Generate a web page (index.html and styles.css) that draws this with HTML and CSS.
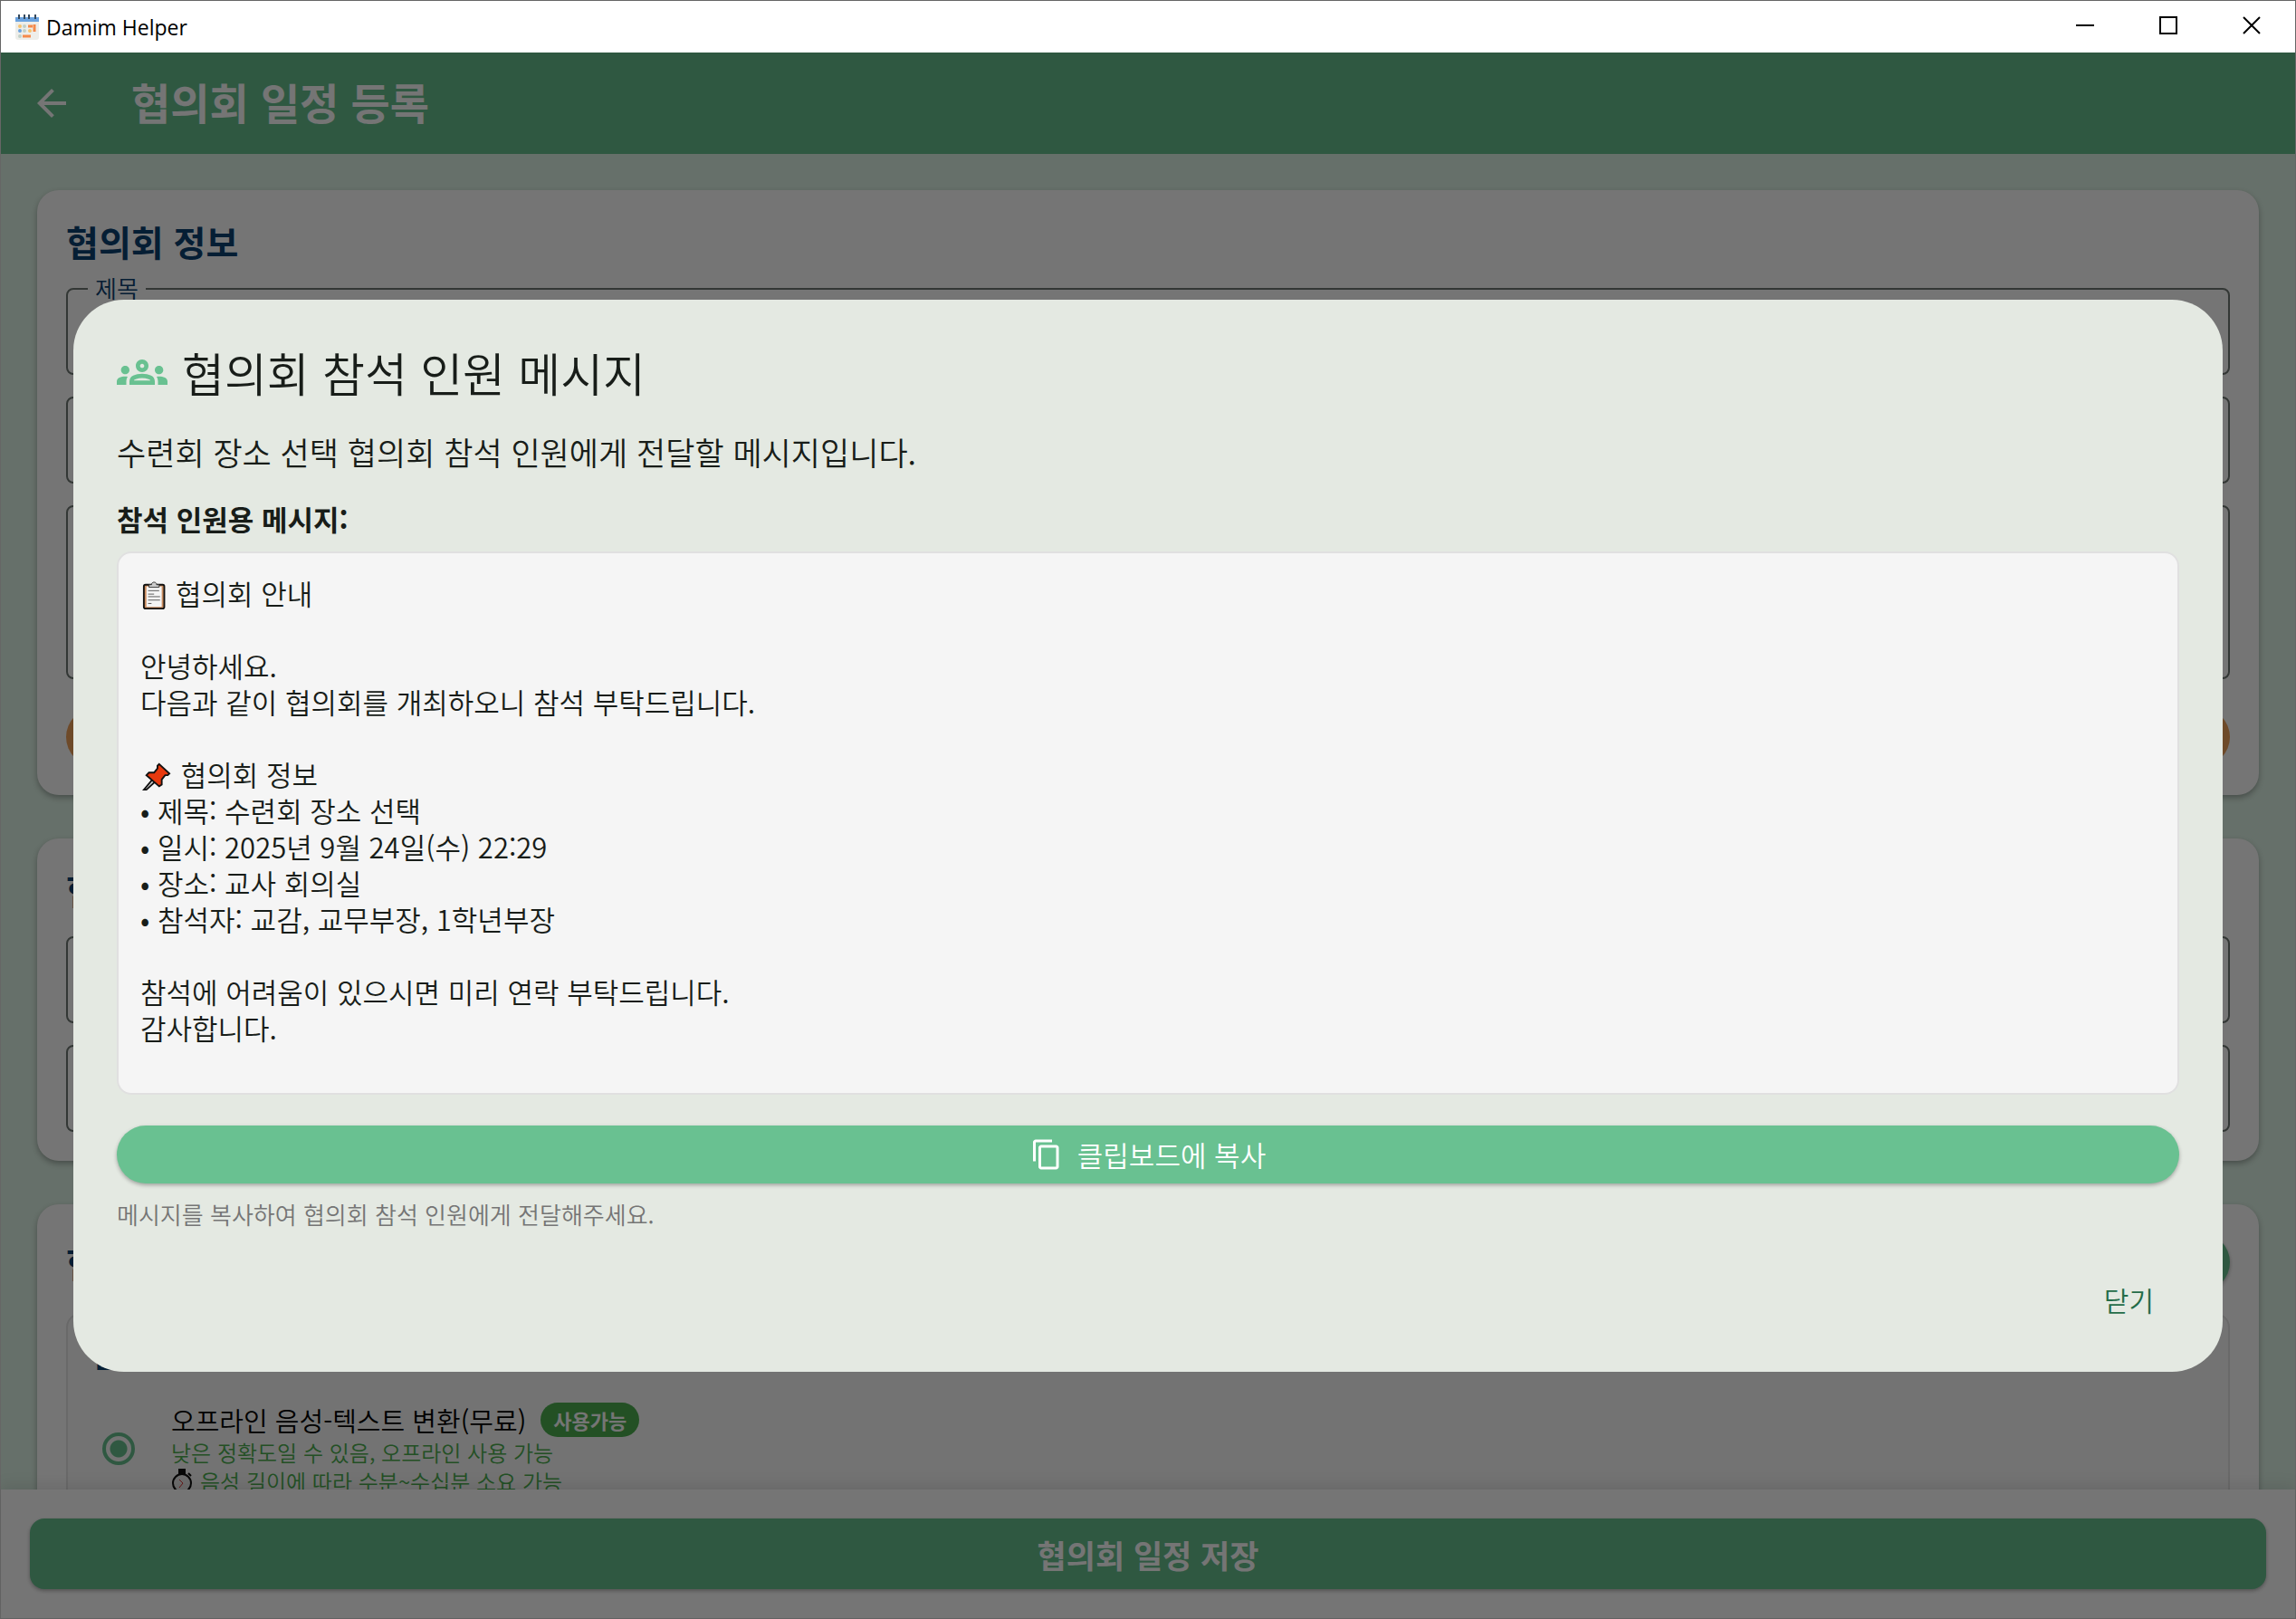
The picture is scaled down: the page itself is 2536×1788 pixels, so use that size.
FILE: index.html
```html
<!DOCTYPE html>
<html lang="ko">
<head>
    <meta charset="UTF-8">
    <meta name="viewport" content="width=device-width, initial-scale=1.0">
    <title>Damim Helper</title>
    <link rel="stylesheet" href="styles.css">
</head>
<body>
    <div class="window">
        <header class="titlebar">
            <svg class="app-icon" viewBox="0 0 26 28">
                <rect x="0" y="4" width="26" height="24" rx="3" fill="#eeeeea"/>
                <rect x="0" y="3" width="26" height="5" fill="#6ba3e0"/>
                <path d="M4 0v5M10 0v5M15 0v5M22 0v5" stroke="#34495e" stroke-width="2"/>
                <circle cx="5" cy="13" r="2" fill="#f6c370"/>
                <circle cx="10" cy="13" r="2" fill="#c2d0c8"/>
                <circle cx="5" cy="18" r="2" fill="#6ba3e0"/>
                <circle cx="10" cy="18" r="2" fill="#c2d0c8"/>
                <circle cx="16" cy="18" r="2" fill="#f6c370"/>
                <circle cx="5" cy="24" r="2" fill="#c2d0c8"/>
                <path d="M14 13h5M21 11v8M8 24h9" stroke="#f58a4b" stroke-width="3"/>
            </svg>
            <span class="app-name">Damim Helper</span>
            <div class="controls">
                <button class="control" aria-label="최소화"><svg viewBox="0 0 20 20"><path d="M0 10h20"/></svg></button>
                <button class="control" aria-label="최대화"><svg viewBox="0 0 20 20"><rect x="1" y="1" width="18" height="18"/></svg></button>
                <button class="control" aria-label="창 닫기"><svg viewBox="0 0 20 20"><path d="M1 1l18 18M19 1L1 19"/></svg></button>
            </div>
        </header>

        <div class="app">
            <div class="appbar">
                <button class="back" aria-label="뒤로"><svg viewBox="0 0 24 24"><path d="M20 11H7.83l5.59-5.59L12 4l-8 8 8 8 1.41-1.41L7.83 13H20v-2z"/></svg></button>
                <h1>협의회 일정 등록</h1>
            </div>

            <main class="content">
                <section class="card">
                    <h2>협의회 정보</h2>
                    <div class="fields">
                        <div class="field">
                            <label for="title">제목</label>
                            <input type="text" id="title">
                        </div>
                        <div class="field"><input type="text" aria-label="일시"></div>
                        <div class="field"><textarea aria-label="내용"></textarea></div>
                    </div>
                    <button class="pill orange" aria-label="추가"></button>
                </section>

                <section class="card">
                    <h2>협의회</h2>
                    <div class="fields">
                        <div class="field"><input type="text" aria-label="장소"></div>
                        <div class="field"><input type="text" aria-label="참석자"></div>
                    </div>
                </section>

                <section class="card">
                    <div class="card-head">
                        <h2>협의회</h2>
                        <button class="pill green" aria-label="녹음"></button>
                    </div>
                    <div class="panel">
                        <h3>음성</h3>
                        <label class="option">
                            <input type="radio" name="engine" checked>
                            <span class="option-text">
                                <span class="option-title">오프라인 음성-텍스트 변환(무료) <span class="badge">사용가능</span></span>
                                <span class="option-sub">낮은 정확도일 수 있음, 오프라인 사용 가능</span>
                                <span class="option-sub">
                                    <svg class="watch" viewBox="0 0 24 28"><path d="M9 1h6v4H9zM19 5l3 3" fill="#111" stroke="#111" stroke-width="2"/><circle cx="12" cy="16" r="10" fill="#eee" stroke="#111" stroke-width="2"/><path d="M9 12l4 4-4 5" fill="none" stroke="#d33"/></svg>
                                    음성 길이에 따라 수분~수십분 소요 가능
                                </span>
                            </span>
                        </label>
                    </div>
                </section>
            </main>

            <footer class="savebar">
                <button class="save">협의회 일정 저장</button>
            </footer>

            <div class="scrim">
                <div class="dialog" role="dialog" aria-labelledby="dialog-title">
                    <div class="dialog-head">
                        <svg class="groups" viewBox="0 0 24 24"><path d="M4 13c1.1 0 2-.9 2-2s-.9-2-2-2-2 .9-2 2 .9 2 2 2zm1.13 1.1c-.37-.06-.74-.1-1.13-.1-.99 0-1.93.21-2.78.58C.48 14.9 0 15.62 0 16.43V18h4.5v-1.61c0-.83.23-1.61.63-2.29zM20 13c1.1 0 2-.9 2-2s-.9-2-2-2-2 .9-2 2 .9 2 2 2zm4 3.43c0-.81-.48-1.53-1.22-1.85-.85-.37-1.79-.58-2.78-.58-.39 0-.76.04-1.13.1.4.68.63 1.46.63 2.29V18H24v-1.57zM16.24 13.65c-1.17-.52-2.61-.9-4.24-.9s-3.07.39-4.24.9C6.68 14.13 6 15.21 6 16.39V18h12v-1.61c0-1.18-.68-2.26-1.76-2.74zM8.07 16c.09-.23.13-.39.91-.69.97-.38 1.99-.56 3.02-.56s2.05.18 3.02.56c.77.3.81.46.91.69H8.07zM12 8c.55 0 1 .45 1 1s-.45 1-1 1-1-.45-1-1 .45-1 1-1m0-2c-1.66 0-3 1.34-3 3s1.34 3 3 3 3-1.34 3-3-1.34-3-3-3z"/></svg>
                        <h2 id="dialog-title">협의회 참석 인원 메시지</h2>
                    </div>
                    <p class="lead">수련회 장소 선택 협의회 참석 인원에게 전달할 메시지입니다.</p>
                    <h3>참석 인원용 메시지:</h3>
                    <div class="message">
                        <p><svg class="clipboard" viewBox="0 0 28 34"><rect x="2" y="4" width="24" height="28" rx="2" fill="#c98b5e" stroke="#111" stroke-width="2"/><path d="M5 6h18v24H5z" fill="#f4f4f4"/><path d="M8 7V4h3c0-4 6-4 6 0h3v3z" fill="#ccc" stroke="#333"/><path d="M7 11h13M7 15h7M7 18h14M7 22h14M7 26h4" stroke="#555"/></svg> 협의회 안내</p>
                        <br>
                        <p>안녕하세요.</p>
                        <p>다음과 같이 협의회를 개최하오니 참석 부탁드립니다.</p>
                        <br>
                        <p><svg class="pin" viewBox="0 0 34 34"><path d="M13 19L2 32l3 0 11-10z" fill="#ddd" stroke="#111" stroke-width="2"/><path d="M20 2l12 11-2 2h-3l-4 5v6l-3 2L5 15l3-3h6l4-5V4z" fill="#e8390e" stroke="#111" stroke-width="2"/></svg> 협의회 정보</p>
                        <p>• 제목: 수련회 장소 선택</p>
                        <p>• 일시: 2025년 9월 24일(수) 22:29</p>
                        <p>• 장소: 교사 회의실</p>
                        <p>• 참석자: 교감, 교무부장, 1학년부장</p>
                        <br>
                        <p>참석에 어려움이 있으시면 미리 연락 부탁드립니다.</p>
                        <p>감사합니다.</p>
                    </div>
                    <button class="copy">
                        <svg viewBox="0 0 24 24"><path d="M16 1H4c-1.1 0-2 .9-2 2v14h2V3h12V1zm3 4H8c-1.1 0-2 .9-2 2v14c0 1.1.9 2 2 2h11c1.1 0 2-.9 2-2V7c0-1.1-.9-2-2-2zm0 16H8V7h11v14z"/></svg>
                        클립보드에 복사
                    </button>
                    <p class="hint">메시지를 복사하여 협의회 참석 인원에게 전달해주세요.</p>
                    <div class="actions">
                        <button class="close">닫기</button>
                    </div>
                </div>
            </div>
        </div>
    </div>
</body>
</html>
```
FILE: styles.css
```css
* {
    box-sizing: border-box;
}
body {
    margin: 0;
    font-family: "Noto Sans CJK KR", sans-serif;
    font-weight: 350;
    color: #181d19;
}
h1, h2, h3, p {
    margin: 0;
}
button, input, textarea {
    font-family: inherit;
    font-weight: inherit;
    cursor: pointer;
}
button {
    border: none;
    padding: 0;
}
.window {
    height: 100vh;
    display: flex;
    flex-direction: column;
    border: 1px solid #666;
}
.titlebar {
    height: 57px;
    flex: none;
    display: flex;
    align-items: center;
    gap: 8px;
    padding: 0 2px 0 16px;
    background: #fff;
}
.app-icon {
    width: 26px;
    height: 28px;
}
.app-name {
    font-family: "Open Sans", sans-serif;
    font-size: 23px;
    font-weight: 400;
    color: #000;
}
.controls {
    display: flex;
    margin-left: auto;
    height: 100%;
}
.control {
    width: 92px;
    background: none;
}
.control svg {
    width: 20px;
    height: 20px;
    fill: none;
    stroke: #000;
    stroke-width: 2;
}
.app {
    flex: 1;
    min-height: 0;
    display: flex;
    flex-direction: column;
    position: relative;
    background: #def3e6;
}
.appbar {
    height: 112px;
    flex: none;
    display: flex;
    align-items: center;
    gap: 64px;
    padding: 0 32px;
    background: #67c18f;
    color: #fff;
}
.back {
    width: 48px;
    height: 48px;
    background: none;
}
.back svg {
    width: 48px;
    height: 48px;
    fill: #fff;
}
h1 {
    font-size: 47px;
    line-height: 64px;
    padding-bottom: 4px;
}
.content {
    flex: 1;
    min-height: 0;
    overflow: hidden;
    padding: 40px;
    display: flex;
    flex-direction: column;
    gap: 48px;
}
.card {
    flex: none;
    background: #fff;
    border-radius: 24px;
    padding: 32px;
    box-shadow: 0 3px 6px rgba(0, 0, 0, 0.3);
}
.card h2 {
    font-size: 39px;
    line-height: 48px;
    margin-bottom: 28px;
    color: #0d4272;
}
.fields {
    display: flex;
    flex-direction: column;
    gap: 24px;
}
.field {
    position: relative;
}
.field label {
    position: absolute;
    left: 24px;
    top: -16px;
    padding: 0 8px;
    font-size: 26px;
    line-height: 32px;
    background: #fff;
    color: #0d4272;
}
.field input, .field textarea {
    display: block;
    width: 100%;
    height: 96px;
    padding: 24px;
    font-size: 30px;
    border: 2px solid #6f7973;
    border-radius: 8px;
    background: none;
    resize: none;
}
.field textarea {
    height: 192px;
}
.pill {
    height: 64px;
    border-radius: 32px;
}
.orange {
    display: block;
    width: 100%;
    margin-top: 32px;
    background: #efa15b;
}
.green {
    width: 240px;
    background: #67c18f;
    box-shadow: 0 2px 4px rgba(0, 0, 0, 0.3);
}
.card-head {
    display: flex;
    justify-content: space-between;
    align-items: center;
    margin-bottom: 24px;
}
.card-head h2 {
    margin: 0;
}
.panel {
    border: 2px solid #e4e4e4;
    border-radius: 16px;
    background: #fafafa;
    padding: 24px 28px;
}
.panel h3 {
    font-size: 32px;
    line-height: 40px;
    color: #0d4272;
}
.option {
    display: flex;
    align-items: center;
    gap: 40px;
    padding: 32px 10px;
}
.option input {
    appearance: none;
    width: 36px;
    height: 36px;
    margin: 0;
    border: 4px solid #67c18f;
    border-radius: 50%;
    background: radial-gradient(circle, #67c18f 9px, transparent 10px);
}
.option-text {
    display: flex;
    flex-direction: column;
}
.option-title {
    display: flex;
    align-items: center;
    gap: 16px;
    font-size: 29px;
    line-height: 40px;
    color: #000;
}
.badge {
    padding: 0 14px;
    border-radius: 19px;
    background: #4caf50;
    color: #fff;
    font-size: 22px;
    font-weight: bold;
    line-height: 38px;
}
.option-sub {
    display: flex;
    align-items: center;
    gap: 8px;
    font-size: 24px;
    line-height: 32px;
    color: #4caf50;
}
.watch {
    width: 24px;
    height: 28px;
}
.savebar {
    flex: none;
    padding: 32px;
    background: #fff;
    box-shadow: 0 -4px 16px rgba(0, 0, 0, 0.1);
}
.save {
    display: block;
    width: 100%;
    height: 78px;
    border-radius: 16px;
    background: #67c18f;
    color: #fff;
    font-size: 35px;
    font-weight: bold;
    box-shadow: 0 2px 4px rgba(0, 0, 0, 0.3);
}
.scrim {
    position: absolute;
    inset: 0;
    display: flex;
    align-items: center;
    padding: 0 80px;
    background: rgba(0, 0, 0, 0.54);
}
.dialog {
    flex: 1;
    padding: 48px;
    border-radius: 56px;
    background: #e4e9e2;
}
.dialog-head {
    display: flex;
    align-items: center;
    gap: 16px;
    margin-bottom: 24px;
}
.dialog-head h2 {
    font-size: 51px;
    font-weight: 350;
    line-height: 64px;
}
.groups {
    width: 56px;
    height: 56px;
    fill: #69c191;
}
.lead {
    font-size: 35px;
    line-height: 64px;
}
.dialog h3 {
    font-size: 31px;
    line-height: 40px;
    margin: 22px 0 16px;
}
.message {
    padding: 24px 24px 52px;
    border: 2px solid #e0e0e0;
    border-radius: 16px;
    background: #f5f5f5;
    font-size: 31px;
    line-height: 40px;
}
.clipboard, .pin {
    height: 32px;
    margin: 0 2px;
    vertical-align: -6px;
}
.copy {
    display: flex;
    align-items: center;
    justify-content: center;
    gap: 16px;
    width: 100%;
    height: 64px;
    margin: 34px 0 16px;
    border-radius: 32px;
    background: #69c191;
    color: #fff;
    font-size: 31px;
    box-shadow: 0 2px 4px rgba(0, 0, 0, 0.3);
}
.copy svg {
    width: 36px;
    height: 36px;
    fill: #fff;
}
.hint {
    font-size: 26px;
    line-height: 36px;
    color: #757575;
}
.actions {
    display: flex;
    justify-content: flex-end;
    margin-top: 44px;
}
.close {
    padding: 0 28px;
    height: 64px;
    background: none;
    color: #246c48;
    font-size: 30px;
}
```
